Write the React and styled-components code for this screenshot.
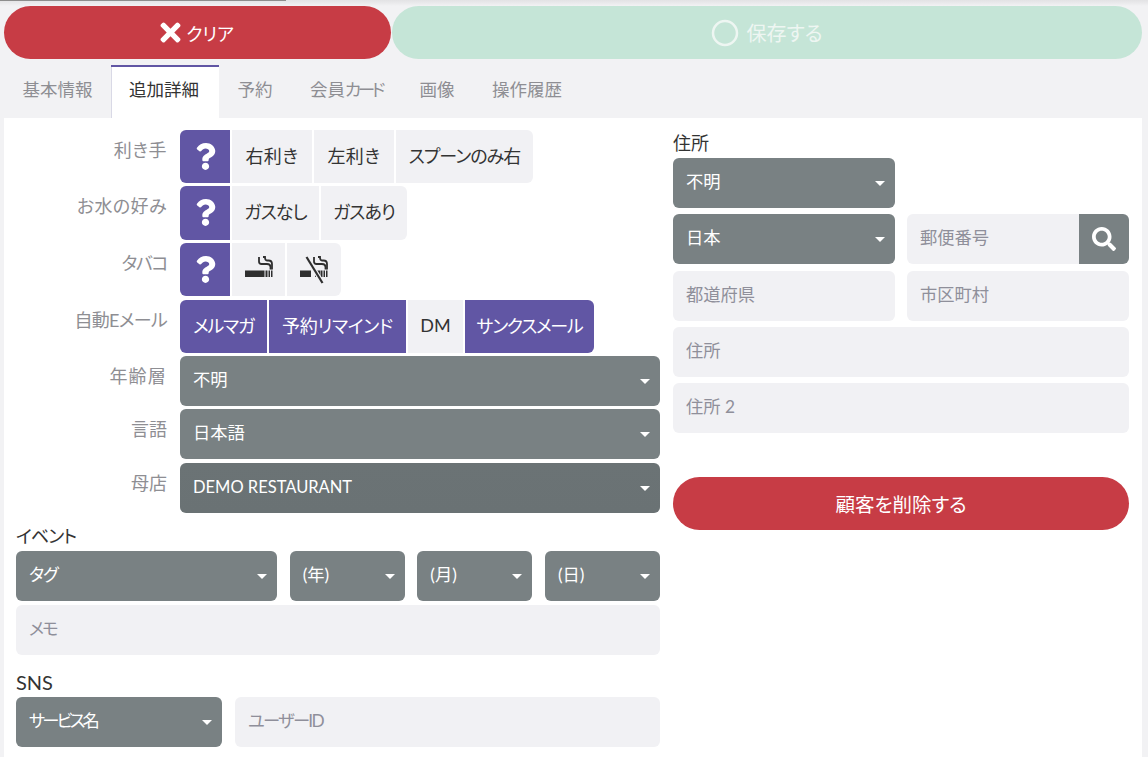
import React from "react";
import styled, { createGlobalStyle } from "styled-components";
import { FaQuestion, FaTimes, FaSearch } from "react-icons/fa";

const Global = createGlobalStyle`
  html, body { margin: 0; padding: 0; height: 757px; overflow: hidden; background: #f2f2f4; }
  body { font-family: Lato, "Noto Sans CJK JP", sans-serif; font-size: 17px; color: #333; font-feature-settings: "palt"; }
  button, input { font-feature-settings: "palt"; }
  * { box-sizing: border-box; }
`;

const Page = styled.div`
  position: relative;
  width: 1148px;
  height: 757px;
  padding: 6px 6px 0 4px;
  display: flex;
  flex-direction: column;
  background: linear-gradient(#e2e2e4 0, #f2f2f4 6px);
`;
const Progress = styled.div`
  position: absolute;
  top: 0;
  left: 0;
  width: 286px;
  height: 1px;
  background: #8d8d8d;
`;
const ActionBar = styled.div`
  display: grid;
  grid-template-columns: 387px 750px;
  gap: 1px;
`;
const ActionButton = styled.button`
  height: 53px;
  border: 0;
  border-radius: 27px;
  display: flex;
  align-items: center;
  justify-content: center;
  gap: ${(p) => (p.$disabled ? 7 : 1)}px;
  padding: 0 ${(p) => (p.$disabled ? 0 : 5)}px 0 0;
  font: inherit;
  font-size: 18px;
  color: ${(p) => (p.$disabled ? "#eef6f2" : "#fff")};
  background: ${(p) => (p.$disabled ? "#c5e5d7" : "#c73c45")};
`;
const SaveText = styled.span`
  font-size: 20px;
`;
const Tabs = styled.div`
  display: flex;
  height: 53px;
  margin-top: 6px;
`;
const Tab = styled.div`
  display: flex;
  align-items: center;
  padding: 0 19px 8px 18.5px;
  font-size: 17.5px;
  color: ${(p) => (p.$active ? "#333" : "#8e8e93")};
  background: ${(p) => (p.$active ? "#fff" : "transparent")};
  border-top: 2px solid ${(p) => (p.$active ? "#6156a4" : "transparent")};
  box-shadow: ${(p) => (p.$active ? "inset 1px 0 0 #d9d9e6" : "none")};
  &:first-child { padding-right: 18px; }
  &:nth-child(2) { padding-right: 20px; }
`;
const Kana = styled.span`
  letter-spacing: -3.4px;
`;
const Panel = styled.div`
  flex: 1;
  background: #fff;
  padding: 12px 13px 0 12px;
  display: grid;
  grid-template-columns: 644px 456px;
  gap: 13px;
  align-content: start;
`;
const Column = styled.div`
  display: flex;
  flex-direction: column;
`;
const FormRow = styled.div`
  display: grid;
  grid-template-columns: 152px 1fr;
  column-gap: 12px;
  margin-top: ${(p) => p.$gap ?? 0}px;
`;
const RowLabel = styled.div`
  text-align: right;
  color: #8e8e93;
  font-size: 18px;
  line-height: 24px;
  padding: 8px 1px 0 0;
  letter-spacing: ${(p) => p.$ls ?? 0}px;
`;
const ButtonGroup = styled.div`
  display: flex;
  gap: 2px;
  height: 53.25px;
`;
const Toggle = styled.button`
  border: 0;
  padding: 0 0 ${(p) => (p.$plain ? 0 : 3)}px;
  width: ${(p) => p.$w}px;
  display: flex;
  align-items: center;
  justify-content: center;
  font: inherit;
  font-size: 18px;
  letter-spacing: ${(p) => p.$ls ?? 0}px;
  color: ${(p) => (p.$on ? "#fff" : "#333")};
  background: ${(p) => (p.$on ? "#6156a4" : "#f1f1f4")};
  &:first-child { border-radius: 6px 0 0 6px; }
  &:last-child { border-radius: 0 6px 6px 0; }
`;
const SelectBox = styled.div`
  position: relative;
  height: 50px;
  border-radius: 6px;
  display: flex;
  align-items: center;
  padding: 0 30px ${(p) => (p.$dark ? 3 : 5)}px 13px;
  color: #fff;
  font-size: ${(p) => (p.$dark ? 16.5 : 17.3)}px;
  letter-spacing: ${(p) => p.$ls ?? 0}px;
  background: ${(p) => (p.$dark ? "linear-gradient(#6b7375, #6a7274)" : "#798183")};
  &::after {
    content: "";
    position: absolute;
    right: 10px;
    top: 23px;
    border-left: 5px solid transparent;
    border-right: 5px solid transparent;
    border-top: 5px solid #fff;
  }
`;
const Field = styled.input`
  display: block;
  width: 100%;
  height: 50px;
  border: 0;
  border-radius: 6px;
  padding: 0 13px 3px;
  background: #f1f1f4;
  font: inherit;
  font-size: 17.3px;
  min-width: 0;
  &::placeholder {
    color: #8f8f9a;
    opacity: 1;
    letter-spacing: ${(p) => p.$ls ?? 0}px;
  }
`;
const SectionLabel = styled.div`
  font-size: ${(p) => p.$size ?? 18}px;
  line-height: 24px;
  color: #333;
  letter-spacing: ${(p) => p.$ls ?? 0}px;
  margin-top: ${(p) => p.$gap ?? 0}px;
  margin-bottom: ${(p) => p.$after ?? 0}px;
`;
const EventGrid = styled.div`
  display: grid;
  grid-template-columns: 261px 115px 115px 115px;
  column-gap: 12.67px;
  margin-bottom: 4px;
`;
const SnsGrid = styled.div`
  display: grid;
  grid-template-columns: 206px 1fr;
  column-gap: 13px;
`;
const AddressGrid = styled.div`
  display: grid;
  grid-template-columns: 222px 222px;
  column-gap: 12px;
  margin-top: ${(p) => p.$gap ?? 0}px;
`;
const AddressWide = styled.div`
  margin-top: 6px;
`;
const PostalWrap = styled.div`
  display: flex;
  height: 50px;
`;
const PostalField = styled(Field)`
  border-radius: 6px 0 0 6px;
  flex: 1;
`;
const SearchButton = styled.button`
  width: 50px;
  border: 0;
  padding: 0;
  background: #798183;
  border-radius: 0 6px 6px 0;
  color: #fff;
  display: flex;
  align-items: center;
  justify-content: center;
`;
const DangerButton = styled.button`
  height: 53px;
  margin-top: 44px;
  border: 0;
  border-radius: 27px;
  background: #c73c45;
  color: #fff;
  font: inherit;
  font-size: 19.5px;
`;

const SmokeIcon = ({ off }) => (
  <svg width="30" height="28" viewBox="0 0 30 28" fill="none">
    <rect x="1" y="14.5" width={off ? 11 : 19.5} height="6.5" fill="#2f2f2f" />
    {off && <rect x="16" y="14.5" width="5" height="6.5" fill="#2f2f2f" />}
    <rect x="21.5" y="14.5" width="2" height="6.5" fill="#2f2f2f" />
    <rect x="24.5" y="14.5" width="1.5" height="6.5" fill="#2f2f2f" />
    <rect x="27" y="14.5" width="1.5" height="6.5" fill="#2f2f2f" />
    <path d="M15 1v4.500c0 1.500 1 2.500 2.500 2.500h5.500c2 0 3.500 1 3.500 3v2.500" stroke="#2f2f2f" strokeWidth="1.800" />
    <path d="M19 1h2c0 2 .5 3.500 2 3.500h1.500c2.500 0 3.500 1.500 3.500 3.500v5.500" stroke="#2f2f2f" strokeWidth="1.800" />
    {off && <path d="M7.500 1L23.500 27" stroke="#f1f1f4" strokeWidth="4.500" />}
    {off && <path d="M7.500 1L23.500 27" stroke="#2f2f2f" strokeWidth="2.200" />}
  </svg>
);

const Question = () => <FaQuestion size={27} color="#fff" />;

const Group = ({ items }) => (
  <ButtonGroup>
    {items.map((it, i) => (
      <Toggle key={i} $w={it.w} $on={it.on} $plain={it.plain} $ls={it.ls}>{it.c}</Toggle>
    ))}
  </ButtonGroup>
);

export default function App() {
  return (
    <Page>
      <Global />
      <Progress />
      <ActionBar>
        <ActionButton>
          <FaTimes size={29} />
          クリア
        </ActionButton>
        <ActionButton $disabled>
          <svg width="28" height="28" viewBox="0 0 28 28" fill="none">
            <circle cx="14" cy="14" r="12" stroke="#eef6f2" strokeWidth="2.500" />
          </svg>
          <SaveText>保存する</SaveText>
        </ActionButton>
      </ActionBar>
      <Tabs>
        <Tab>基本情報</Tab>
        <Tab $active>追加詳細</Tab>
        <Tab>予約</Tab>
        <Tab>会員<Kana>カード</Kana></Tab>
        <Tab>画像</Tab>
        <Tab>操作履歴</Tab>
      </Tabs>
      <Panel>
        <Column>
          <FormRow>
            <RowLabel $ls={0.5}>利き手</RowLabel>
            <Group items={[
              { w: 50, on: true, plain: true, c: <Question /> },
              { w: 80, ls: 0.5, c: "右利き" },
              { w: 80, ls: 0.5, c: "左利き" },
              { w: 137, ls: -1, c: "スプーンのみ右" },
            ]} />
          </FormRow>
          <FormRow $gap={3}>
            <RowLabel $ls={0.4}>お水の好み</RowLabel>
            <Group items={[
              { w: 50, on: true, plain: true, c: <Question /> },
              { w: 87, ls: -1, c: "ガスなし" },
              { w: 86, ls: -1, c: "ガスあり" },
            ]} />
          </FormRow>
          <FormRow $gap={3.5}>
            <RowLabel $ls={-1.5}>タバコ</RowLabel>
            <Group items={[
              { w: 50, on: true, plain: true, c: <Question /> },
              { w: 53, plain: true, c: <SmokeIcon /> },
              { w: 54, plain: true, c: <SmokeIcon off /> },
            ]} />
          </FormRow>
          <FormRow $gap={3.5}>
            <RowLabel $ls={-0.7}>自動Eメール</RowLabel>
            <Group items={[
              { w: 87, on: true, ls: -1.2, c: "メルマガ" },
              { w: 137, on: true, ls: -0.3, c: "予約リマインド" },
              { w: 55, c: "DM" },
              { w: 129, on: true, ls: -1.3, c: "サンクスメール" },
            ]} />
          </FormRow>
          <FormRow $gap={3}>
            <RowLabel $ls={1.2}>年齢層</RowLabel>
            <SelectBox>不明</SelectBox>
          </FormRow>
          <FormRow $gap={3.25}>
            <RowLabel>言語</RowLabel>
            <SelectBox>日本語</SelectBox>
          </FormRow>
          <FormRow $gap={3.75}>
            <RowLabel>母店</RowLabel>
            <SelectBox $dark>DEMO RESTAURANT</SelectBox>
          </FormRow>
          <SectionLabel $gap={11} $after={3} $ls={-1}>イベント</SectionLabel>
          <EventGrid>
            <SelectBox $ls={-1}>タグ</SelectBox>
            <SelectBox>(年)</SelectBox>
            <SelectBox>(月)</SelectBox>
            <SelectBox>(日)</SelectBox>
          </EventGrid>
          <Field placeholder="メモ" $ls={-2} />
          <SectionLabel $gap={15} $after={3} $size={20}>SNS</SectionLabel>
          <SnsGrid>
            <SelectBox $ls={-2.8}>サービス名</SelectBox>
            <Field placeholder="ユーザーID" $ls={-1.7} />
          </SnsGrid>
        </Column>
        <Column>
          <SectionLabel $gap={1} $after={1}>住所</SectionLabel>
          <AddressGrid $gap={2}>
            <SelectBox>不明</SelectBox>
          </AddressGrid>
          <AddressGrid $gap={6}>
            <SelectBox>日本</SelectBox>
            <PostalWrap>
              <PostalField placeholder="郵便番号" />
              <SearchButton><FaSearch size={24} /></SearchButton>
            </PostalWrap>
          </AddressGrid>
          <AddressGrid $gap={7}>
            <Field placeholder="都道府県" />
            <Field placeholder="市区町村" />
          </AddressGrid>
          <AddressWide><Field placeholder="住所" /></AddressWide>
          <AddressWide><Field placeholder="住所 2" /></AddressWide>
          <DangerButton>顧客を削除する</DangerButton>
        </Column>
      </Panel>
    </Page>
  );
}
